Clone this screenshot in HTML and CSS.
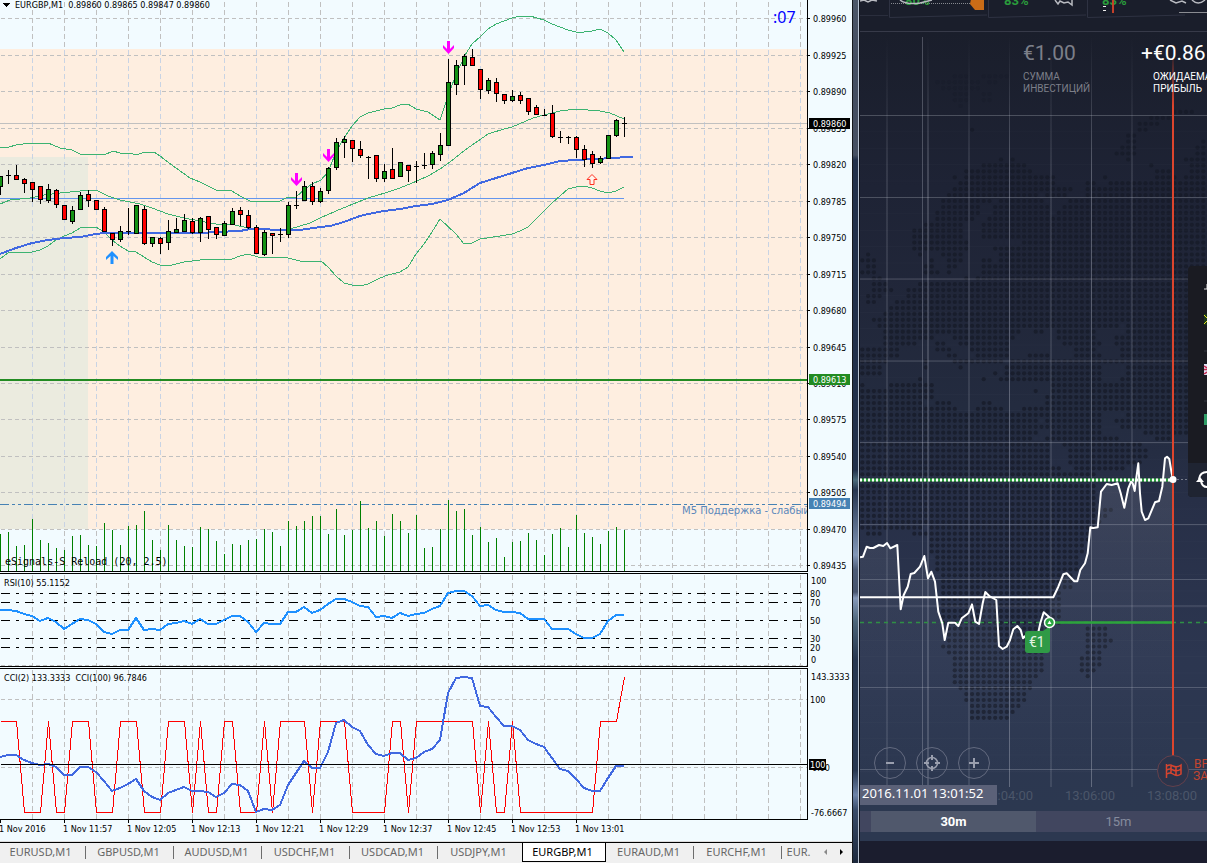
FILE: index.html
```html
<!DOCTYPE html>
<html lang="ru">

<head>
    <meta charset="UTF-8">
    <meta name="viewport" content="width=device-width, initial-scale=1.0">
    <title>EURGBP,M1</title>
    <link rel="stylesheet" href="styles.css">
</head>

<body>
    <div class="desktop">
        <main class="terminal">
            <svg class="pane pane_main" id="mainChart"></svg>
            <svg class="pane pane_rsi" id="rsiChart"></svg>
            <svg class="pane pane_cci" id="cciChart"></svg>
            <svg class="pane pane_time" id="timeAxis"></svg>
            <nav class="tabs">
                <button class="tab">EURUSD,M1</button>
                <button class="tab">GBPUSD,M1</button>
                <button class="tab">AUDUSD,M1</button>
                <button class="tab">USDCHF,M1</button>
                <button class="tab">USDCAD,M1</button>
                <button class="tab before">USDJPY,M1</button>
                <button class="tab active">EURGBP,M1</button>
                <button class="tab">EURAUD,M1</button>
                <button class="tab">EURCHF,M1</button>
                <button class="tab last">EUR.</button>
                <button class="scroll off" aria-label="Back"><svg width="5" height="8"><path d="M4 1V7L1 4Z"/></svg></button>
                <button class="scroll" aria-label="Forward"><svg width="5" height="8"><path d="M1 1V7L4 4Z"/></svg></button>
            </nav>
        </main>

        <div class="frame"></div>

        <section class="broker">
            <header class="strip">
                <svg class="strip_art" id="stripArt"></svg>
            </header>

            <div class="board">
                <svg class="board_art" id="boardArt"></svg>
                <div class="amounts">
                    <div class="amount muted">
                        <div class="sum">€1.00</div>
                        <div class="caption">СУММА<br>ИНВЕСТИЦИЙ</div>
                    </div>
                    <div class="amount profit">
                        <div class="sum">+€0.86</div>
                        <div class="caption">ОЖИДАЕМАЯ<br>ПРИБЫЛЬ</div>
                    </div>
                </div>
                <aside class="assets">
                    <svg width="19" height="231">
                        <path d="M19 18V23H16" fill="none" stroke="#ddd"/>
                        <path d="M16 48H19V59H16Z" fill="#1c3a1c"/>
                        <path d="M16 49L19 52M19 55L16 58" stroke="#e8e020"/>
                        <path d="M16 85H19M16 135H19" stroke="#33363f"/>
                        <path d="M16 98H19V109H16Z" fill="#dfe0f4"/>
                        <path d="M16 100L19 102M16 103.5H19M19 106L16 108" stroke="#c8254c" stroke-width="1.5"/>
                        <path d="M16 148H19V159H16Z" fill="#2f9d67"/>
                        <path d="M0 197H19V231H4Q0 231 0 227Z" fill="#1f2432"/>
                        <path d="M19 206Q12 206 11 213M13 215Q14 221 19 221" fill="none" stroke="#fff" stroke-width="2"/>
                        <path d="M8 216L12 211L16 216Z" fill="#fff"/>
                    </svg>
                </aside>
                <div class="zoom">
                    <button class="round" aria-label="Zoom out"><svg width="16" height="16"><path d="M4 8H12" stroke-width="2"/></svg></button>
                    <button class="round" aria-label="Center"><svg width="16" height="16"><circle cx="8" cy="8" r="5.5" stroke-width="1.5"/><path d="M8 0V5M8 11V16M0 8H5M11 8H16" stroke-width="2"/></svg></button>
                    <button class="round" aria-label="Zoom in"><svg width="16" height="16"><path d="M3 8H13M8 3V13" stroke-width="2"/></svg></button>
                </div>
                <time class="stamp">2016.11.01 13:01:52</time>
            </div>

            <div class="ranges">
                <button class="range active">30m</button>
                <button class="range">15m</button>
            </div>
            <footer class="bottom"></footer>
        </section>
    </div>

    <script src="script.js"></script>
</body>

</html>
```

FILE: styles.css
```css
* {
    box-sizing: border-box;
}

body {
    margin: 0;
    background: #1b1d2e;
    font-family: "Noto Sans", sans-serif;
}

button {
    margin: 0;
    padding: 0;
    border: 0;
    background: none;
    font-family: inherit;
    cursor: pointer;
}

svg {
    display: block;
}

.desktop {
    display: grid;
    grid-template-columns: minmax(0, 1fr) 7px 348px;
    height: 100vh;
    min-height: 863px;
    overflow: hidden;
}

/* terminal window */

.terminal {
    display: flex;
    flex-direction: column;
    min-width: 0;
    background: #f2fbff;
}

.pane {
    width: 100%;
    flex: none;
    shape-rendering: crispEdges;
}

.pane_main {
    height: 573px;
}

.pane_rsi {
    height: 95px;
}

.pane_cci {
    height: 152px;
}

.pane_time {
    height: 22px;
    border-bottom: 1px solid #dcdcdc;
}

.pane text {
    font-family: "DejaVu Sans Condensed", "DejaVu Sans", sans-serif;
    font-size: 9px;
}

.pane .note {
    font-family: "DejaVu Sans", sans-serif;
    font-size: 10px;
    fill: #5a87bb;
}

.pane .signal {
    font-family: "DejaVu Sans Mono", monospace;
    font-size: 10px;
}

.pane .countdown {
    font-family: "Noto Sans", sans-serif;
    font-size: 16px;
    fill: #0000ff;
}

.tabs {
    display: flex;
    flex: 1;
    height: 21px;
    border-top: 1px solid #000;
    background: #f0f0f0;
    overflow: hidden;
}

.tab {
    position: relative;
    flex: none;
    width: 88px;
    height: 18px;
    padding-right: 3px;
    color: #666;
    font-size: 11px;
    line-height: 18px;
    white-space: nowrap;
}

.tab:first-child {
    margin-left: -2px;
}

.tab::after {
    content: "";
    position: absolute;
    right: 0;
    top: 3px;
    height: 13px;
    border-right: 1px solid #6d6d6d;
}

.tab.before,
.tab.active {
    width: 84px;
}

.tab.active {
    height: 19px;
    border: 1px solid #000;
    border-top: 0;
    background: #fff;
    color: #000;
}

.tab.last {
    width: 36px;
}

.tab.before::after,
.tab.active::after,
.tab.last::after {
    display: none;
}

.scroll {
    display: flex;
    align-items: center;
    justify-content: center;
    width: 18px;
    height: 17px;
}

.scroll:last-child {
    flex: 0 1 18px;
}

.scroll.off {
    width: 14px;
    fill: #8a8a8a;
}

/* window frame between the two programs */

.frame {
    border-left: 1px solid #15181c;
    border-right: 1px solid #b9c3d2;
    background: linear-gradient(#4d5768 0, #434d60 60px, #465062 155px, #22304a 160px, #22304a 470px, #4c6b7a 480px, #27364f 490px, #8297b8 555px, #4b5a75 570px, #46536d 592px, #8598b8 598px, #4c6478 622px, #27364f 660px, #27364f 770px, #6d83a8 795px, #3a4c69 810px, #1c283c 863px);
}

/* broker window */

.broker {
    display: flex;
    flex-direction: column;
    min-width: 0;
    border-left: 1px solid #10131c;
    color: #fff;
    font-family: Roboto, sans-serif;
    background: #2c3850;
}

.strip {
    height: 32px;
    border-bottom: 1px solid #373a49;
    background: #1a1e2b;
}

.strip_art {
    width: 100%;
    height: 31px;
}

.strip_art text {
    font-family: Roboto, sans-serif;
    font-size: 13px;
    font-weight: bold;
    fill: #2a9c3c;
}

.board {
    position: relative;
    flex: 1;
    overflow: hidden;
    background: linear-gradient(#1a1e2b, #1e2335 20%, #21273a 35%, #232b3f 48%, #272f47 60%, #2c3650 80%, #2c3850);
}

.board_art {
    width: 100%;
    height: 100%;
}

.board_art text {
    font-family: Roboto, sans-serif;
    font-size: 13px;
    fill: #4b566a;
}

.board_art .expiry {
    font-size: 12px;
    fill: #c4452f;
}

.board_art .stake {
    font-size: 14px;
    fill: #e3f3e5;
}

.amounts {
    position: absolute;
    top: 9px;
    left: 163px;
    display: flex;
    gap: 52px;
}

.sum {
    font-size: 21px;
    line-height: 24px;
}

.caption {
    margin-top: 6px;
    font-size: 10px;
    line-height: 12px;
}

.muted {
    width: 66px;
    color: #7c7f89;
}

.profit .caption {
    padding-left: 12px;
}

.assets {
    position: absolute;
    top: 234px;
    right: 0;
    border-radius: 4px 0 0 4px;
    background: #1a1b22;
}

.zoom {
    position: absolute;
    left: 14px;
    bottom: 32px;
    display: flex;
    gap: 10px;
}

.round {
    display: flex;
    align-items: center;
    justify-content: center;
    width: 32px;
    height: 32px;
    border: 1px solid #636a7f;
    border-radius: 50%;
    fill: none;
    stroke: #9a9fae;
}

.stamp {
    position: absolute;
    left: 0;
    bottom: 6px;
    width: 137px;
    height: 20px;
    padding-left: 2px;
    background: #5b6178;
    font-family: "Noto Sans", sans-serif;
    font-size: 13px;
    line-height: 16px;
}

.ranges {
    display: flex;
    height: 21px;
    padding-left: 11px;
    background: #41465f;
}

.range {
    width: 165px;
    color: #858b9d;
    font-size: 13px;
    line-height: 21px;
}

.range.active {
    background: #50586c;
    color: #fff;
    font-weight: bold;
}

.bottom {
    height: 31px;
    border-top: 9px solid #2c3850;
    background: #1b1d2e;
}
```

FILE: script.js
```javascript
const STEP = 8;
const AXIS = 807;

// high, body top, body bottom, low, g = up / r = down / d = doji
const candles = `176 176 186 195 g|170 175 175 184 d|165 175 179 179 r|178 179 183 193 r|182 182 189 202 r|186 186 199 204 r
184 189 200 203 g|189 190 204 208 r|205 205 219 219 r|206 210 221 224 g|192 195 209 209 g|190 194 200 207 r|200 200 209 209 r
207 209 231 231 r|233 233 239 246 r|226 231 239 242 g|208 231 231 235 d|205 205 233 233 g|206 209 243 245 r|237 237 243 247 g
237 238 243 254 r|220 231 242 250 g|218 229 232 232 g|214 220 231 231 g|218 221 232 234 r|217 218 232 242 g|216 216 229 239 r
227 227 234 239 r|221 223 235 235 g|208 211 224 225 g|207 210 214 226 r|210 215 227 229 r|225 227 253 253 r|230 232 254 256 g
233 233 235 254 r|228 234 234 242 d|202 205 234 238 g|191 205 205 209 d|181 186 200 201 g|182 186 201 205 r|188 191 201 203 g
167 168 190 194 g|138 142 167 170 g|136 139 142 158 g|140 140 148 162 r|141 149 155 158 r|156 157 157 179 d|155 155 178 182 r
164 171 178 182 g|148 169 178 179 r|162 162 176 176 g|165 165 170 182 r|161 166 166 183 d|153 165 165 169 d|151 153 164 169 g
133 145 154 161 g|59 82 145 145 g|60 65 84 95 g|54 56 65 85 g|49 57 65 65 r|69 69 89 99 r|78 80 90 94 g|78 82 93 102 r
94 94 100 104 r|90 96 100 102 g|92 95 100 104 r|98 98 111 115 r|105 107 114 114 r|109 115 115 116 d|105 113 136 138 r
131 137 137 143 d|136 137 137 144 d|136 137 149 158 r|145 149 159 167 r|151 154 163 168 r|156 158 162 164 g|135 135 158 158 g
119 120 135 137 g|117 123 123 137 d`.split(/[|\n]/).map(s => s.split(' '));

const volumes = [534,532,546,545,519,540,543,548,550,536,535,545,546,523,530,545,526,525,511,540,550,525,540,546,547,527,529,541,554,544,545,540,539,529,532,546,521,526,521,516,516,534,509,535,530,501,528,521,536,514,521,533,515,548,547,529,500,511,509,535,527,542,538,557,542,541,533,540,555,534,528,547,515,533,537,544,531,527,530];

const bandUp = '0,147 9,147 16,145 30,143 40,144 48,143 60,148 72,150 80,154 104,155 113,151 120,153 130,153 136,155 145,152 154,152 160,156 176,168 190,178 200,182 216,190 232,191 240,196 250,201 280,201 288,197 296,197 304,190 312,184 321,180 328,172 336,152 344,138 352,126 360,117 368,113 384,109 392,108 400,105 408,104 416,109 428,112 440,120 445,105 450,90 456,75 465,55 472,44 480,37 488,29 496,24 504,21 512,18 520,16 530,16 544,20 552,24 560,27 568,30 576,32 584,32 592,31 600,29 608,33 616,40 624,52';
const bandMid = '0,204 10,200 30,198 44,195 60,193 80,191 96,190 108,196 120,200 140,204 152,208 168,214 184,218 200,221 216,224 235,225 248,228 265,229 290,229 300,226 310,223 320,218 336,211 353,204 368,198 385,193 400,188 417,181 428,176 440,169 450,162 465,150 488,134 504,129 512,127 533,118 544,115 560,111 576,109 600,111 610,113 624,119';
const bandLow = '0,259 8,253 32,252 40,250 48,246 56,240 64,236 72,233 80,228 96,227 104,232 112,240 120,246 128,251 136,252 144,257 152,262 160,265 172,265 184,262 200,260 208,259 232,259 240,256 248,254 258,257 288,258 304,262 321,261 328,267 336,276 344,283 352,285 360,286 368,284 380,278 388,275 400,272 408,267 416,254 424,244 432,232 440,219 456,234 464,244 472,243 480,239 500,236 512,234 520,231 528,227 536,219 552,203 560,196 568,189 576,187 584,186 592,188 600,191 608,193 616,191 624,187';
const average = '0,254 16,248 32,243 48,240 64,238 80,237 96,234 105,233 200,233 216,232 240,231 250,229 290,230 300,230 320,227 330,226 344,222 360,216 368,214 384,211 400,209 416,206 432,204 448,200 464,193 480,183 496,178 512,173 528,168 544,165 560,161 576,160 592,159 616,158 624,157 633,157';

const rsi = [610,610,611,614,616,621,618,622,629,624,619,620,624,632,634,630,630,618,630,629,630,624,623,621,624,619,624,624,620,616,616,622,632,623,624,624,612,612,607,613,610,604,599,599,602,606,607,617,616,618,613,616,614,613,609,606,593,591,591,596,606,605,610,612,612,613,619,619,619,629,629,629,634,638,638,634,621,615,615];
const cci = [757,755,755,760,763,765,764,767,775,775,767,767,772,781,791,788,784,779,791,797,800,793,790,787,791,791,792,797,793,784,785,791,812,809,810,805,785,773,761,768,768,752,723,720,727,731,745,754,756,753,753,760,758,752,749,740,693,678,677,678,706,707,717,726,726,730,740,744,747,758,769,771,779,788,791,791,778,766,766];
const cciFast = 'U0 U2 D3 D5 U6 D7 D8 U9 U11 D12 D14 U15 U17 D18 D20 U21 U23 D24 U25 D26 D27 U28 U29 D30 D32 U33 D34 U35 U38 D39 U40 U43 D44 D48 U49 U50 D51 U52 U59 D60 U61 D62 D63 U64 D65 D74 U75 U77'.split(' ');

function line(x1, y1, x2, y2, stroke, extra = '') {
    return `<path d="M${x1} ${y1}L${x2} ${y2}" stroke="${stroke}" fill="none" ${extra}/>`;
}

function poly(points, stroke, width = 1, extra = '') {
    return `<polyline points="${points}" fill="none" stroke="${stroke}" stroke-width="${width}" stroke-linejoin="round" ${extra}/>`;
}

function rect(x, y, w, h, fill, extra = '') {
    return `<rect x="${x}" y="${y}" width="${w}" height="${h}" fill="${fill}" ${extra}/>`;
}

function text(x, y, s, extra = '') {
    return `<text x="${x}" y="${y}" ${extra}>${s}</text>`;
}

function columns(top, bottom, color) {
    let out = '';
    for (let x = 32; x < AXIS; x += 32) {
        out += line(x + 0.5, top, x + 0.5, bottom, color, 'stroke-dasharray="5 3"');
    }
    return out;
}

function row(y) {
    return line(1, y + 0.5, AXIS, y + 0.5, '#c0c0c0', 'stroke-dasharray="4 3"');
}

function series(values, top) {
    return values.map((v, i) => `${i * STEP},${v - top}`).join(' ');
}

function drawMain() {
    let out = rect(0, 49, AXIS, 480, '#feeee0') + rect(0, 157, 88, 372, '#ebebdf');
    out += columns(2, 49, '#c0c0c0') + columns(50, 529, '#c8d3e4') + columns(531, 571, '#c0c0c0');
    const prices = [18, 55, 91, 128, 164, 201, 237, 274, 310, 347, 383, 419, 456, 492, 529, 565];
    prices.forEach(y => {
        out += row(y);
    });
    out += line(0, 123.5, AXIS, 123.5, '#c0c0c0') + line(0, 198.5, 624, 198.5, '#6495ed');
    out += line(0, 380, AXIS, 380, '#228b22', 'stroke-width="2"');
    out += line(0, 504.5, AXIS, 504.5, '#4682b4', 'stroke-dasharray="9 3 3 3 3 3"');
    volumes.forEach((y, i) => {
        out += line(i * STEP + 0.5, y, i * STEP + 0.5, 571, '#008000');
    });
    out += poly(bandUp, '#3cb371') + poly(bandMid, '#3cb371') + poly(bandLow, '#3cb371');
    out += poly(average, '#4169e1', 2);
    candles.forEach(([high, top, bottom, low, kind], i) => {
        const x = i * STEP;
        out += line(x + 0.5, high, x + 0.5, low, '#000');
        if (kind === 'd') {
            out += line(x - 2, +top + 0.5, x + 3, +top + 0.5, '#000');
        } else {
            out += rect(x - 1.5, +top + 0.5, 4, bottom - top, kind === 'g' ? '#149214' : '#ff0000', 'stroke="#000"');
        }
    });
    out += '<g shape-rendering="auto">';
    [[296, 173], [328, 149], [448, 41]].forEach(([x, y]) => {
        out += `<path d="M${x - 1} ${y}H${x + 2}V${y + 8}L${x + 6} ${y + 4}V${y + 7}L${x + 0.5} ${y + 13}L${x - 5} ${y + 7}V${y + 4}L${x - 1} ${y + 8}Z" fill="#ff00ff"/>`;
    });
    out += '<path d="M110.5 264H113.5V256L118 260V257L112 251L106 257V260L110.500 256Z" fill="#1e90ff"/>';
    out += '<path d="M590 184.500H594V179.500H597L592 174.500L587 179.500H590Z" fill="#fff4ec" stroke="#ff3020"/></g>';

    out += text(682, 514, 'М5 Поддержка - слабый', 'class="note"');
    out += rect(AXIS, 0, 60, 573, '#f2fbff');
    prices.forEach((y, i) => {
        out += line(AXIS, y + 0.5, AXIS + 3, y + 0.5, '#000') + text(813, y + 4, (0.8996 - i * 0.00035).toFixed(5));
    });
    out += line(AXIS + 0.5, 0, AXIS + 0.5, 572, '#000') + line(0, 571.5, AXIS + 1, 571.5, '#000');
    [[118, '#000', '0.89860'], [374, '#228b22', '0.89613'], [498, '#4682b4', '0.89494']].forEach(([y, color, s]) => {
        out += rect(809, y, 41, 11, color) + text(813, y + 9, s, 'fill="#fff"');
    });
    out += text(5, 565, 'eSignals-S Reload (20, 2.5)', 'class="signal"');
    out += '<path d="M2 3H10L6 7Z"/>' + text(15, 8, 'EURGBP,M1&#160; 0.89860 0.89865 0.89847 0.89860');
    out += text(773, 23, ':07', 'class="countdown"');
    document.getElementById('mainChart').innerHTML = out;
}

function drawRsi() {
    const top = 573;
    let out = columns(2, 93, '#c0c0c0') + row(92);
    [[593, 80], [602, 70], [620, 50], [638, 30], [647, 20]].forEach(([y, s]) => {
        out += line(1, y - top + 0.5, 802, y - top + 0.5, '#000', 'stroke-dasharray="9 6 3 6"');
        out += text(810, y - top + 4, s);
    });
    out += poly(series(rsi, top), '#1e90ff', 2);
    out += `<path d="M0 0.500H${AXIS}.500V93.500H0" fill="none" stroke="#000"/>`;
    out += text(811, 11, '100') + text(811, 90, '0') + text(4, 13, 'RSI(10) 55.1152');
    document.getElementById('rsiChart').innerHTML = out;
}

function drawCci() {
    const top = 668;
    let out = columns(2, 151, '#c0c0c0') + row(31) + row(99);
    const fast = cciFast.map(s => `${s.slice(1) * STEP + 0.5},${s[0] === 'U' ? 53.5 : 144.5}`);
    fast.push('624.5,9');
    out += poly(fast.join(' '), '#ff0000', 1);
    out += poly(series(cci, top), '#4169e1', 2);
    out += line(1, 96.5, AXIS, 96.5, '#000');
    out += `<path d="M0 0.500H${AXIS}.500V151.500H0" fill="none" stroke="#000"/>`;
    out += text(811, 12, '143.3333') + text(810, 35, '100') + text(812, 103, '0.00') + text(811, 148, '-76.6667');
    out += rect(809, 91, 17, 11, '#000') + text(810, 100, '100', 'fill="#fff"');
    out += text(4, 13, 'CCI(2) 133.3333&#160; CCI(100) 96.7846');
    document.getElementById('cciChart').innerHTML = out;
}

function drawTime() {
    let out = text(-1, 12, '1 Nov 2016');
    out += line(0.5, 0, 0.5, 3, '#000');
    ['11:57', '12:05', '12:13', '12:21', '12:29', '12:37', '12:45', '12:53', '13:01'].forEach((t, i) => {
        const x = 64 * (i + 1);
        out += line(x + 0.5, 0, x + 0.5, 3, '#000') + text(x - 1, 12, '1 Nov ' + t);
    });
    document.getElementById('timeAxis').innerHTML = out;
}

// asset cards cut off by the top of the window
function drawStrip() {
    let out = '';
    [29, 128, 227].forEach(x => {
        out += `<path d="M${x}.500 -2V17.500L${x + 98} 15" fill="none" stroke="#2e3242"/>`;
    });
    out += line(0, 15.5, 28, 15.5, '#2a2e3d');
    out += line(31, 3.5, 111, 3.5, '#85888f', 'stroke-dasharray="1 1"');
    out += text(45, 5, '80%') + text(144, 5, '83%') + text(242, 5, '83%');
    out += '<path d="M111 -1H124V10H115L110 4Z" fill="#c96c17"/>';
    out += '<path d="M0 1L4 0L8 2L12 0L17 1M40 0Q46 5 60 3L72 0M195 0L198 4L200 1L204 3L208 2L212 5V0M310 0L316 3L322 1L326 3M332 0Q338 6 345 0" fill="none" stroke="#b8bac0" stroke-width="1.500"/>';
    out += line(253, 0, 253, 13, '#c3402a', 'stroke-width="2"') + line(319, 12.5, 347, 12.5, '#8a8c92');
    out += '<path d="M243 6.500H246M243 10.500H246" stroke="#eee"/>';
    document.getElementById('stripArt').innerHTML = out;
}

// world map: one entry per row of dots, runs of columns
const map = `16-18,21-25|13-20,22-23|14-20|16-18,21-22|16-18,21-22|17|54-57|50-53|48-51|19,48-49|46-47|46-47,59|45-47,58-59|44-47,58-59
24,26,46,56-59|21-28,50,57-59|18-29,51-53,57-59|16,18-33,42,51-54,56-59|17-33,39-40,43-59|16-36,39-59|15-30,32-35,39-59|14-22,24-31,36-59
14-20,23-32,35-59|13-20,23-32,34-59|13-19,22-59|11-17,21-59|9-17,21-59|9-17,21-59|9-18,28-59|9-18,23-59|1,10,14-17,24-59|0-2,12,15-17,21-22,24-59
1-2,11-12,15-16,21-59|0-2,11-13,15,21-59|2-3,18,20-59|2-4,10-59|2-5,8-59|1-3,8-59|1-2,6-59|5-59|4-59|2-59|3-44,46-59|4-27,30-31,34-40,46-59
4-12,16-26,34-40,44-59|4-9,13-14,17-25,35-41,44-59|0-6,13-15,19-25,37-40,45-59|0-6,15-16,20-25,29-32,37-41,45-59|0-4,11,16-24,26-59
0-3,11,17,25-41,46-59|0-3,23,25-41,46-59|10,21,24-41,45-59|0,5-12,33-59|0-12,30,33-59|0-12,32-59|0-10,13-15,21-22,32-59|0-16,20-24,28-59
0-41,46-59|0-30,32-41,44-59|0-41,45-59|0-30,33-41,49-59|0-29,32-44,51-53|0-32,35-48|0-32,36-49|0-32,36-49|0-32,36-48|0-34,37-45|0-40|0-40
0-40|0-40|0-40|0-40|0-43|0-42|0-41|0-10,12-40|1-3,9-39|12-39|12-38|12-38|13-37|13-37|13-37|14-36|14-36|14-36|14-34|14-34|14-34|14-34|14-34|14-34
15-32,39-42|15-32,39-42|15-31,39-43|14-31,39-42|15-31,39-41|16-31,38-41|16-31,38-41|16-31,38-40|16-30,39|16-29|17-29|18-28|18-28|19-27|19-26|19-25`.split(/[|\n]/);

const quoteOld = '15,352 24,350 35,320 45,324 55,324 72,315 85,318 96,309 106,325 127,315 137,508 146,465 158,440 167,402 178,399 195,380 208,348 219,415 229,395 240,425 250,515 262,550 269,600 280,548 300,548 310,558 320,535 340,520 351,493 361,545 372,552 383,490 391,456 403,468 424,480 432,618 443,627 455,620 465,600 475,568 487,558 497,570 504,595 520,580 535,585 548,585 556,550 566,517 585,533';
const quoteNew = '15,472 595,472 610,440 625,403 635,400 645,410 658,424 667,424 676,390 690,370 698,340 706,262 715,264 728,262 738,155 755,132 770,135 788,130 797,160 808,203 820,145 828,125 833,130 839,153 843,120 850,70 855,160 860,215 870,240 880,235 900,187 912,183 922,140 930,55 936,50 943,57 950,100 954,118';

// quotes are kept at three times the board scale
function quote(points) {
    return points.split(' ').map(p => {
        const [x, y] = p.split(',');
        return `${(x / 3 - 5).toFixed(1)},${(y / 3 + 408).toFixed(1)}`;
    }).join(' ');
}

function drawBoard() {
    let out = '<defs><linearGradient id="fade" x2="0" y2="1"><stop stop-color="#e8eaf0" stop-opacity="0.130"/><stop offset="1" stop-color="#8090b0" stop-opacity="0"/></linearGradient>';
    out += '<linearGradient id="rule" x2="0" y2="1"><stop stop-color="#c0c4d0" stop-opacity="0"/><stop offset="0.180" stop-color="#c0c4d0"/></linearGradient>';
    out += '<linearGradient id="deadline" x2="0" y2="1"><stop stop-color="#dd452d" stop-opacity="0.100"/><stop offset="0.070" stop-color="#dd452d"/></linearGradient></defs>';
    let dots = '';
    map.forEach((runs, j) => {
        runs.split(',').forEach(run => {
            const [from, to = from] = run.split('-');
            for (let n = +from; n <= +to; n++) {
                dots += `<circle cx="${(2.3 + n * 5.78).toFixed(1)}" cy="${(44.3 + j * 5.94).toFixed(1)}" r="2.1" opacity="${j < 6 ? 0.4 : 1}"/>`;
            }
        });
    });
    out += `<g fill="#161a26" fill-opacity="0.700">${dots}</g>`;

    out += `<polygon points="0,748 ${quote(quoteOld)} 190,566 ${quote(quoteNew.slice(quoteNew.indexOf('595')))} 313,748" fill="url(#fade)"/>`;
    for (let y = 83.5; y < 750; y += 16.4) {
        out += line(0, y.toFixed(1), 347, y.toFixed(1), '#fff', 'opacity="0.020"');
    }
    [26, 108, 190, 271].forEach(x => {
        out += rect(x, 5, 2, 750, 'url(#rule)', 'opacity="0.140"');
    });
    out += rect(62, 5, 1, 750, '#c0c4d0', 'opacity="0.300"');
    out += rect(67, 5, 2, 750, 'url(#rule)', 'opacity="0.220"');
    [149, 231].forEach(x => {
        out += rect(x, 5, 1, 750, 'url(#rule)', 'opacity="0.360"');
    });
    [83.5, 165.5, 247, 329, 410.5, 492.5, 547.5, 574, 655.5, 737.5].forEach(y => {
        out += line(0, y, 347, y, '#c0c4d0', 'opacity="0.270"');
    });

    out += line(0, 448, 313, 448, '#2ca23c', 'stroke-width="3"') + line(0, 448, 313, 448, '#fff', 'stroke-width="3" stroke-dasharray="2 2"');
    out += line(313, 447.5, 347, 447.5, '#777d8c', 'stroke-dasharray="2 2"');
    out += line(0, 590.5, 347, 590.5, '#2f8f45', 'stroke-width="1.500" stroke-dasharray="4 4"');
    out += poly(quote(quoteOld), '#fff', 2) + poly(quote(quoteNew), '#fff', 2);
    out += line(190, 590.5, 313, 590.5, '#2da43c', 'stroke-width="2.500"');
    out += rect(312, 25, 2, 699, 'url(#deadline)');
    out += '<circle cx="313" cy="447.500" r="3.500" fill="#fff"/>';
    out += '<path d="M168 599H183L190 594V618Q190 621 187 621H168Q165 621 165 618V602Q165 599 168 599Z" fill="#2f9a46"/>';
    out += text(169, 615, '€1', 'class="stake"');
    out += '<circle cx="189.500" cy="590.500" r="5" fill="#2ba640" stroke="#fff" stroke-width="1.500"/><path d="M187.500 592H191.500L189.500 588.500Z" fill="#fff"/>';

    out += '<circle cx="313" cy="739" r="15.500" fill="#2c344b" stroke="#64414c"/>';
    out += '<path d="M306.500 732V746M307 734Q310 732 313 734Q317 736 321 733V742Q317 745 313 742Q310 740 307 742M307 738Q310 736 313 738Q317 740 321 737M311 733V741M316 735V743" fill="none" stroke="#d6442f" stroke-width="1.500"/>';
    out += text(334, 736, 'ВРЕМЯ', 'class="expiry"') + text(333, 748, 'ЗАКР', 'class="expiry"');
    out += text(123, 768, '13:04:00') + text(205, 768, '13:06:00') + text(287, 768, '13:08:00');
    document.getElementById('boardArt').innerHTML = out;
}

drawMain();
drawRsi();
drawCci();
drawTime();
drawStrip();
drawBoard();
```
